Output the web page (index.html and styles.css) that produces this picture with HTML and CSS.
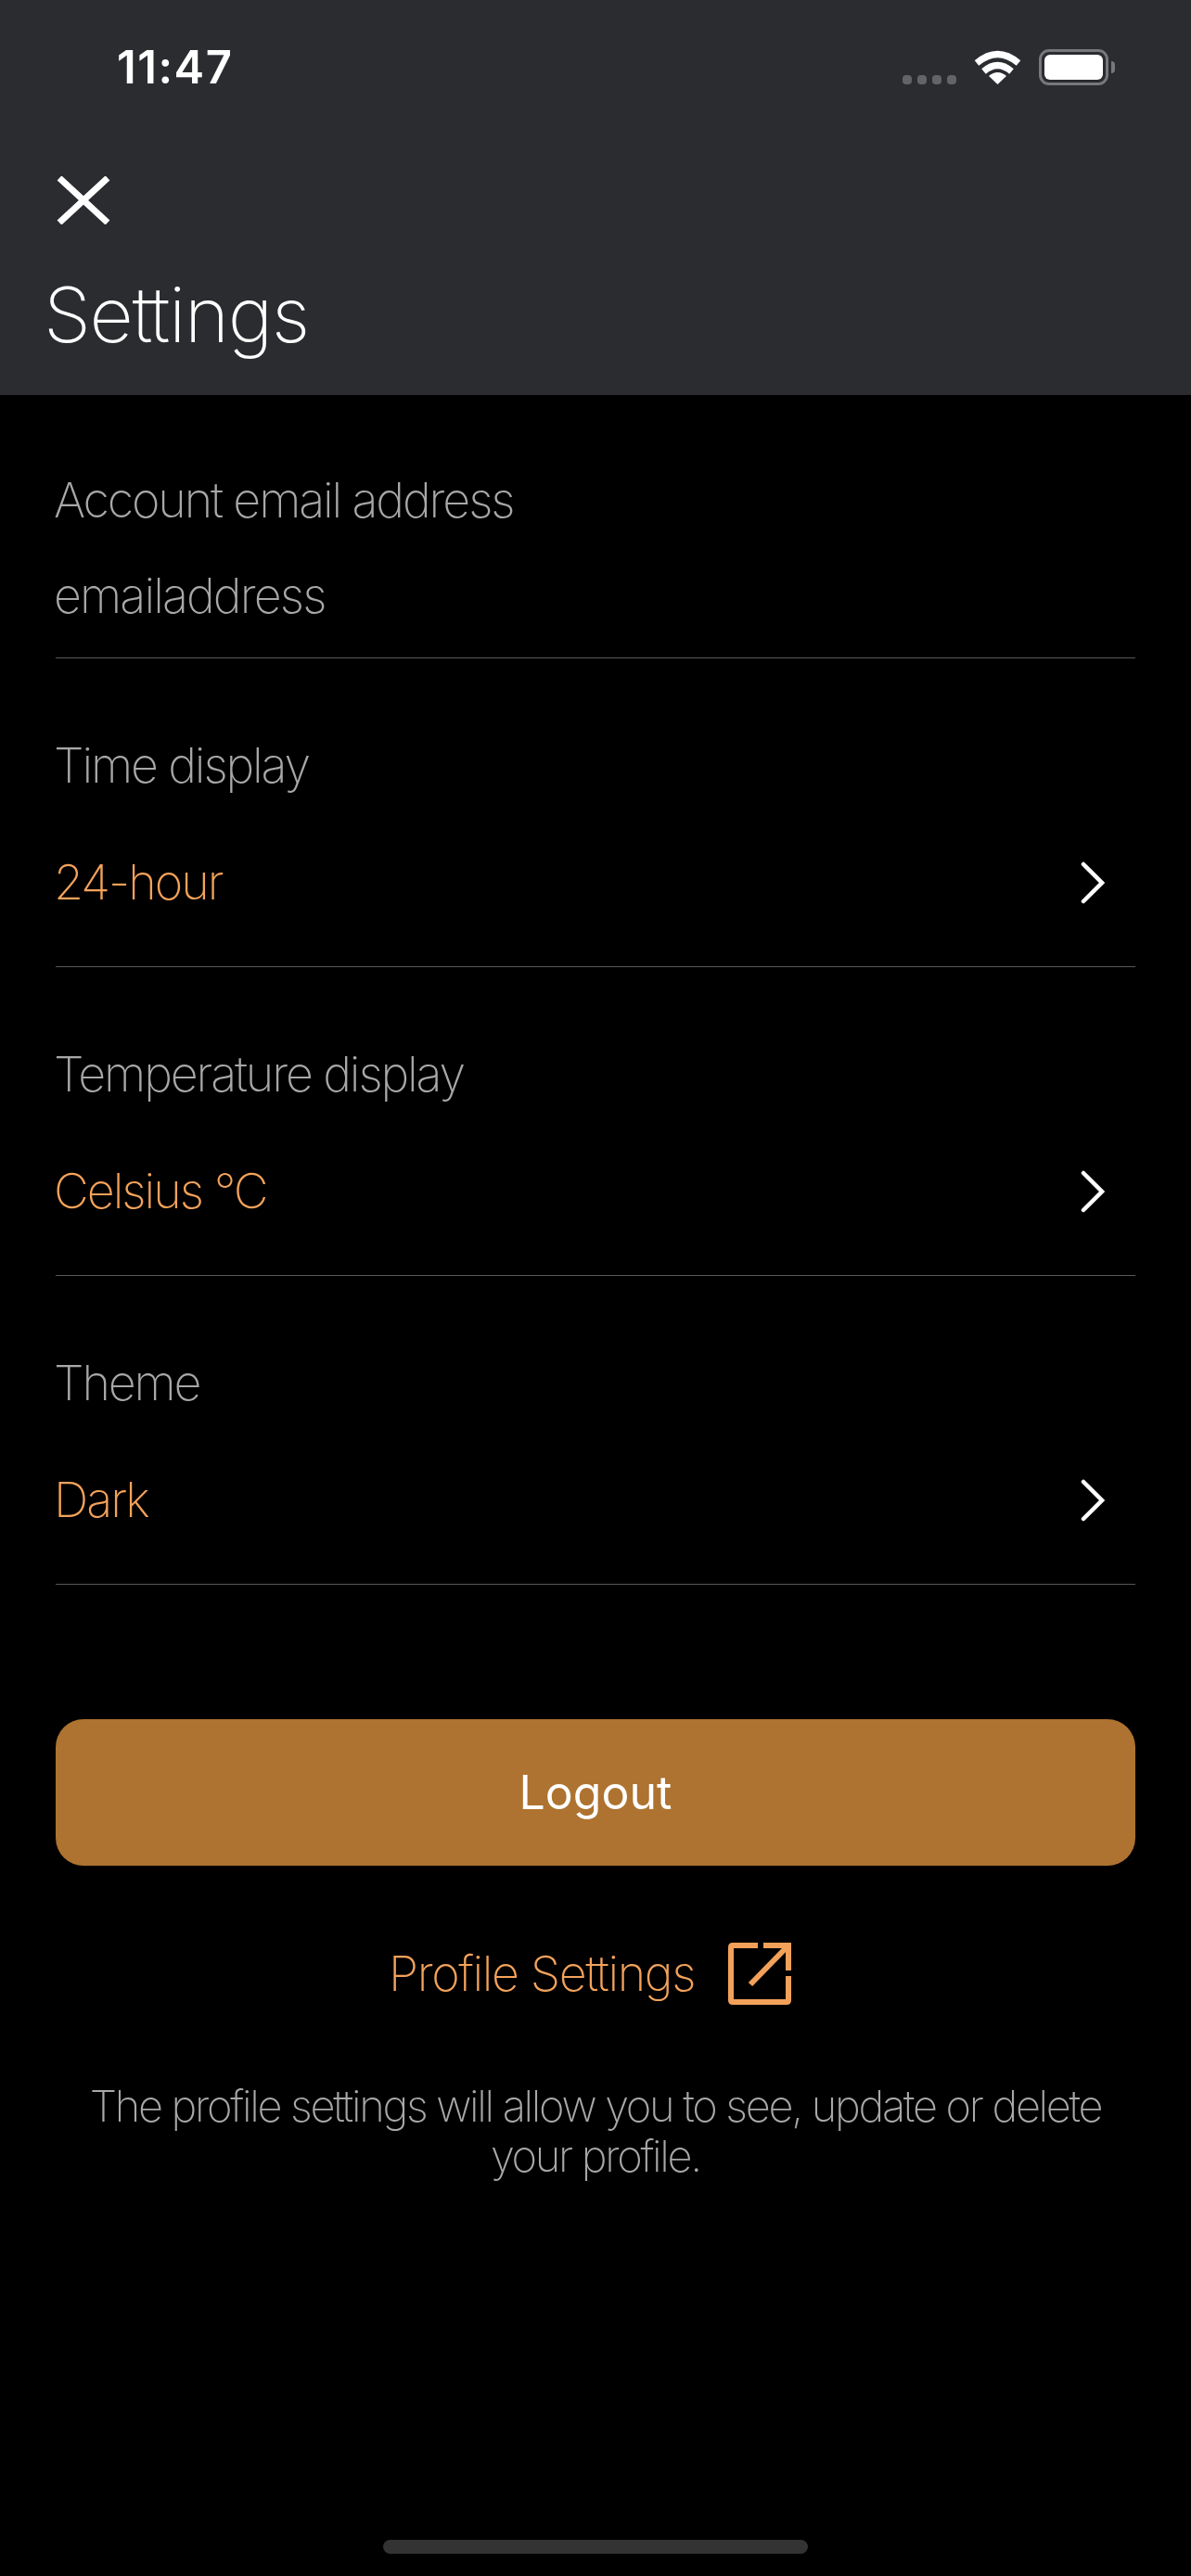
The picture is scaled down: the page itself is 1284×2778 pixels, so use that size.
FILE: index.html
```html
<!DOCTYPE html>
<html lang="en">
<head>
  <meta charset="UTF-8">
  <meta name="viewport" content="width=device-width, initial-scale=1.0">
  <title>Settings</title>
  <link rel="stylesheet" href="styles.css">
</head>
<body>
  <div class="page">
    <header class="top">
      <div class="status">
        <span class="clock">11:47</span>
        <div class="status-icons">
          <div class="signal"><i></i><i></i><i></i><i></i></div>
          <svg class="wifi" viewBox="0 0 51 37">
            <path d="M3 14 Q25.5 -5 48 14" fill="none" stroke="#fff" stroke-width="7"/>
            <path d="M10.5 23 Q25.5 10 40.5 23" fill="none" stroke="#fff" stroke-width="7"/>
            <path d="M25.5 37 L16 28 Q25.5 20 35 28 Z" fill="#fff"/>
          </svg>
          <div class="battery"><div class="battery-fill"></div></div>
          <div class="battery-nub"></div>
        </div>
      </div>
      <svg class="close" viewBox="0 0 58 52">
        <path d="M3 2 L55 50 M55 2 L3 50" fill="none" stroke="#fff" stroke-width="7"/>
      </svg>
      <h1 class="title">Settings</h1>
    </header>

    <main class="content">
      <section class="field field-first">
        <div class="label">Account email address</div>
        <div class="email">emailaddress</div>
      </section>

      <section class="field">
        <div class="label">Time display</div>
        <div class="choice">
          <span class="value">24-hour</span>
          <svg class="chevron" viewBox="0 0 26 46"><path d="M3 3 L23 23 L3 43" fill="none" stroke="#fff" stroke-width="4.5" stroke-linecap="round"/></svg>
        </div>
      </section>

      <section class="field">
        <div class="label">Temperature display</div>
        <div class="choice">
          <span class="value">Celsius °C</span>
          <svg class="chevron" viewBox="0 0 26 46"><path d="M3 3 L23 23 L3 43" fill="none" stroke="#fff" stroke-width="4.5" stroke-linecap="round"/></svg>
        </div>
      </section>

      <section class="field">
        <div class="label">Theme</div>
        <div class="choice">
          <span class="value">Dark</span>
          <svg class="chevron" viewBox="0 0 26 46"><path d="M3 3 L23 23 L3 43" fill="none" stroke="#fff" stroke-width="4.5" stroke-linecap="round"/></svg>
        </div>
      </section>

      <button class="logout">Logout</button>

      <a class="profile-link">
        <span>Profile Settings</span>
        <svg class="external" viewBox="0 0 68 67">
          <path d="M32 3 H5 Q3 3 3 5 V62 Q3 64 5 64 H63 Q65 64 65 62 V36 M38 3 H65 V30" fill="none" stroke="#f2a15a" stroke-width="6"/>
          <path d="M24 45 L63 5" fill="none" stroke="#f2a15a" stroke-width="6"/>
        </svg>
      </a>

      <p class="note">The profile settings will allow you to see, update or delete your profile.</p>
    </main>

    <div class="home-bar"></div>
  </div>
</body>
</html>
```

FILE: styles.css
```css
* {
  box-sizing: border-box;
}
body {
  margin: 0;
  background-color: #000;
  font-family: Inter, 'Liberation Sans', sans-serif;
  color: #fff;
}
.page {
  width: 1284px;
  height: 2778px;
  display: flex;
  flex-direction: column;
  background-color: #000;
}
.top {
  height: 426px;
  background-color: #2b2c30;
  padding: 0 0 0 47px;
}
.status {
  height: 190px;
  display: flex;
  justify-content: space-between;
  padding: 54px 82px 0 79px;
}
.clock {
  font-size: 49px;
  font-weight: 600;
  line-height: 38px;
  letter-spacing: 1.5px;
}
.status-icons {
  display: flex;
  align-items: flex-start;
  margin-top: -1px;
}
.signal {
  display: flex;
  gap: 6px;
  margin-top: 28px;
  margin-right: 19px;
}
.signal i {
  width: 10px;
  height: 10px;
  border-radius: 4px;
  background-color: #636468;
}
.wifi {
  width: 51px;
  height: 37px;
  margin-top: 1px;
  margin-right: 19px;
}
.battery {
  width: 75px;
  height: 39px;
  border: 3px solid #77787c;
  border-radius: 11px;
  padding: 3px;
}
.battery-fill {
  width: 100%;
  height: 100%;
  border-radius: 6px;
  background-color: #fff;
}
.battery-nub {
  width: 4px;
  height: 13px;
  margin: 13px 0 0 3px;
  border-radius: 0 4px 4px 0;
  background-color: #77787c;
}
.close {
  display: block;
  width: 58px;
  height: 52px;
  margin-left: 14px;
}
.title {
  margin: 48px 0 0;
  font-size: 82px;
  font-weight: 150;
  line-height: 100px;
  letter-spacing: -1.4px;
}
.content {
  padding: 0 60px;
  transform: translateZ(0);
}
.field {
  padding: 86px 0 0;
  border-bottom: 1px solid #58585a;
}
.field-first {
  padding: 84px 0 36px;
}
.label {
  margin-left: -2px;
  font-size: 52px;
  font-weight: 150;
  line-height: 60px;
  letter-spacing: -2.15px;
  color: #a8a8a8;
}
.email {
  margin: 43px 0 0 -2px;
  font-size: 52px;
  font-weight: 150;
  line-height: 60px;
  letter-spacing: -1.9px;
  color: #a8a8a8;
}
.choice {
  display: flex;
  justify-content: space-between;
  align-items: center;
  height: 60px;
  margin: 66px 0 60px;
  padding-right: 33px;
}
.value {
  margin-left: -2px;
  font-size: 52px;
  font-weight: 150;
  line-height: 60px;
  letter-spacing: -2px;
  color: #f4a25a;
}
.chevron {
  width: 26px;
  height: 46px;
}
.logout {
  display: block;
  width: 100%;
  height: 158px;
  margin-top: 145px;
  border: none;
  border-radius: 30px;
  background-color: #ae7330;
  color: #fff;
  font-family: inherit;
  font-size: 50px;
  font-weight: 400;
}
.profile-link {
  display: flex;
  justify-content: center;
  align-items: center;
  gap: 36px;
  margin-top: 83px;
  padding-right: 12px;
  font-size: 52px;
  font-weight: 150;
  letter-spacing: -1.4px;
  color: #f4a25a;
}
.external {
  width: 68px;
  height: 67px;
}
.note {
  margin: 82px 0 0;
  font-size: 47px;
  font-weight: 150;
  line-height: 54px;
  letter-spacing: -2.32px;
  text-align: center;
  color: #a8a8a8;
}
.home-bar {
  width: 458px;
  height: 15px;
  margin: auto auto 24px;
  border-radius: 8px;
  background-color: #333;
}
```
